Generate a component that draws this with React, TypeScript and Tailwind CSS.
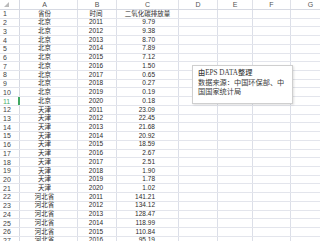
import React from 'react';

const cols = [
  { key: 'A', w: 'w-[58px]' },
  { key: 'B', w: 'w-[39px]' },
  { key: 'C', w: 'w-[62px]' },
  { key: 'D', w: 'w-[39px]' },
  { key: 'E', w: 'w-[35px]' },
  { key: 'F', w: 'w-[38px]' },
  { key: 'G', w: 'w-[40px]' },
];

const bj = ['9.79', '9.38', '8.70', '7.89', '7.12', '1.50', '0.65', '0.27', '0.19', '0.18'];
const tj = ['23.09', '22.45', '21.68', '20.92', '18.59', '2.67', '2.51', '1.90', '1.78', '1.02'];
const hb = ['141.21', '134.12', '128.47', '118.99', '110.84', '95.19'];

const rows: [string, string, string][] = [
  ['省份', '时间', '二氧化碳排放量'],
  ...bj.map((v, i) => ['北京', String(2011 + i), v] as [string, string, string]),
  ...tj.map((v, i) => ['天津', String(2011 + i), v] as [string, string, string]),
  ...hb.map((v, i) => ['河北省', String(2011 + i), v] as [string, string, string]),
];

const cjk = "font-['Liberation_Sans','Noto_Sans_CJK_SC',sans-serif]";

const App = () => {
  return (
    <div className={`relative w-[320px] h-[241px] overflow-hidden bg-white text-[#2b2b2b] ${cjk}`}>
      {/* column headers */}
      <div className="flex h-[10px] border-b border-[#d6d9e2]">
        <div className="w-[20px] shrink-0 border-r border-[#d6d9e2] relative">
          <div className="absolute left-[4px] top-[2px] w-0 h-0 border-l-[5px] border-l-transparent border-b-[5px] border-b-[#bbbbbb]" />
        </div>
        {cols.map((c) => (
          <div
            key={c.key}
            className={`${c.w} shrink-0 border-r border-[#dfe1e8] flex items-center justify-center text-[7px] leading-none text-[#555] ${c.key === 'A' ? 'pr-[8px]' : ''}`}
          >
            {c.key}
          </div>
        ))}
      </div>

      {/* rows */}
      {rows.map((r, i) => {
        const n = i + 1;
        const active = n === 11;
        return (
          <div key={n} className="flex h-[8.72px] border-b border-[#e3e5ec]">
            <div
              className={`w-[20px] shrink-0 flex items-center pl-[3px] text-[7px] leading-none ${
                active ? 'text-[#4caf6e] border-r-2 border-[#3fa862]' : 'text-[#444] border-r border-[#d6d9e2]'
              }`}
            >
              {n}
            </div>
            <div className="w-[58px] shrink-0 border-r border-[#dcdfe8] flex items-center justify-center pr-[8px] text-[6.5px] leading-none">
              {r[0]}
            </div>
            <div className="w-[39px] shrink-0 border-r border-[#dcdfe8] flex items-center justify-center pr-[2px] text-[6.5px] leading-none">
              {r[1]}
            </div>
            <div
              className={`w-[62px] shrink-0 border-r border-[#dcdfe8] flex items-center text-[6.5px] leading-none ${
                n === 1 ? 'justify-center' : 'justify-end pr-[23px]'
              }`}
            >
              {r[2]}
            </div>
            <div className="w-[39px] shrink-0 border-r border-[#dcdfe8]" />
            <div className="w-[35px] shrink-0 border-r border-[#dcdfe8]" />
            <div className="w-[38px] shrink-0 border-r border-[#dcdfe8]" />
            <div className="w-[40px] shrink-0 border-r border-[#dcdfe8]" />
          </div>
        );
      })}

      {/* comment */}
      <div className="absolute left-[192px] top-[65px] w-[101px] h-[39px] border border-[#cfcfcf] bg-white shadow-[1px_1px_2px_rgba(0,0,0,0.12)] pl-[5px] pt-[3px] text-[7.2px] leading-[9.5px] text-[#3a3a3a] font-['Liberation_Serif','Noto_Sans_CJK_SC',serif]">
        <div className="font-medium">由EPS DATA整理</div>
        <div>数据来源：中国环保部、中</div>
        <div>国国家统计局</div>
      </div>
    </div>
  );
};

export default App;
